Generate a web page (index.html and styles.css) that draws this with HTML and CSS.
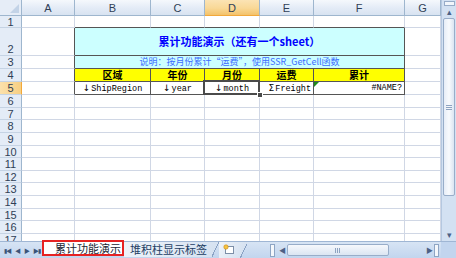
FILE: index.html
```html
<!DOCTYPE html>
<html lang="zh-CN">
<head>
    <meta charset="UTF-8">
    <title>累计功能演示</title>
    <link rel="stylesheet" href="styles.css">
</head>
<body>
    <div class="excel">
        <div class="main">
            <div class="sheet" id="sheet">
                <div class="corner"><span class="corner-tri"></span></div>
                <div class="ch">A</div>
                <div class="ch">B</div>
                <div class="ch">C</div>
                <div class="ch ch-sel">D</div>
                <div class="ch">E</div>
                <div class="ch">F</div>
                <div class="ch">G</div>

                <div class="rh">1</div>
                <div class="c"></div>
                <div class="c top-edge"></div>
                <div class="c top-edge"></div>
                <div class="c top-edge"></div>
                <div class="c top-edge"></div>
                <div class="c top-edge"></div>
                <div class="c"></div>

                <div class="rh rh-tall">2</div>
                <div class="c left-edge"></div>
                <div class="c title">累计功能演示（还有一个sheet）</div>
                <div class="c"></div>

                <div class="rh">3</div>
                <div class="c left-edge"></div>
                <div class="c note">说明：按月份累计“运费”，使用SSR_GetCell函数</div>
                <div class="c"></div>

                <div class="rh">4</div>
                <div class="c left-edge"></div>
                <div class="c head">区域</div>
                <div class="c head">年份</div>
                <div class="c head">月份</div>
                <div class="c head">运费</div>
                <div class="c head">累计</div>
                <div class="c"></div>

                <div class="rh rh-sel">5</div>
                <div class="c left-edge"></div>
                <div class="c field"><span class="arrow">↓</span>ShipRegion</div>
                <div class="c field"><span class="arrow">↓</span>year</div>
                <div class="c field selected"><span class="arrow">↓</span>month</div>
                <div class="c field right"><span class="arrow">Σ</span>Freight</div>
                <div class="c field right err">#NAME?</div>
                <div class="c"></div>
            </div>
            <div class="vscroll">
                <div class="vsplit"></div>
                <div class="vbtn">&#9652;</div>
                <div class="vthumb"><span class="grip-v"></span></div>
                <div class="vtrack"></div>
                <div class="vbtn">&#9662;</div>
            </div>
        </div>
        <div class="bottom">
            <div class="tabnav">
                <span class="nav">&#9646;&#9664;</span>
                <span class="nav">&#9664;</span>
                <span class="nav">&#9654;</span>
                <span class="nav">&#9654;&#9646;</span>
            </div>
            <div class="tabs">
                <div class="tab active">累计功能演示</div>
                <div class="tab">堆积柱显示标签</div>
                <div class="tab tab-new">
                    <svg width="12" height="10" viewBox="0 0 12 10">
                        <rect x="2.5" y="2.5" width="8" height="7" fill="#fff" stroke="#7d8fa8"/>
                        <circle cx="3" cy="3" r="2.2" fill="#f6c343" stroke="#c98a12" stroke-width="0.6"/>
                    </svg>
                </div>
            </div>
            <div class="hscroll">
                <span class="hsplit"></span>
                <span class="harrow">&#9664;</span>
                <span class="hthumb"><span class="grip-h"></span></span>
                <span class="htrack"></span>
                <span class="harrow">&#9654;</span>
                <span class="hend"></span>
            </div>
            <div class="box"></div>
        </div>
    </div>

    <script>
        const sheet = document.getElementById('sheet');
        for (let r = 6; r <= 17; r++) {
            const head = document.createElement('div');
            head.className = 'rh';
            head.textContent = r;
            sheet.appendChild(head);
            for (let c = 0; c < 7; c++) {
                const cell = document.createElement('div');
                cell.className = 'c';
                sheet.appendChild(cell);
            }
        }
    </script>
</body>
</html>
```

FILE: styles.css
```css
body {
    margin: 0;
    padding: 0;
    background: #fff;
}

.excel {
    width: 456px;
    height: 258px;
    display: flex;
    flex-direction: column;
    overflow: hidden;
    font-family: "Liberation Sans", "Noto Sans CJK SC", sans-serif;
}

.main {
    height: 241px;
    display: flex;
}

/* ---------- grid ---------- */

.sheet {
    width: 441px;
    height: 241px;
    overflow: hidden;
    display: grid;
    grid-template-columns: 22px 53px 76px 54px 55px 54px 91px 36px;
    grid-template-rows: 16px 12px 28px 13px 13px 13px repeat(12, 12.65px);
}

.sheet > div {
    box-sizing: border-box;
    border-right: 1px solid #d0d7e5;
    border-bottom: 1px solid #d0d7e5;
    min-width: 0;
    white-space: nowrap;
    overflow: hidden;
}

.corner {
    position: relative;
    background: #e6edf7;
    border-right-color: #9eb6ce !important;
    border-bottom-color: #9eb6ce !important;
}

.corner-tri {
    position: absolute;
    right: 2px;
    bottom: 2px;
    width: 0;
    height: 0;
    border-left: 9px solid transparent;
    border-bottom: 9px solid #c3d3e7;
}

.ch {
    background: linear-gradient(#f5f8fc, #e3ebf6 55%, #d8e3f1);
    border-right-color: #9eb6ce !important;
    border-bottom-color: #9eb6ce !important;
    color: #2f3f56;
    font-size: 11px;
    text-align: center;
    line-height: 16px;
}

.ch-sel {
    background: linear-gradient(#fbe3b4, #f9d896 55%, #f3c26a);
    border-bottom-color: #f2a83a !important;
}

.rh {
    background: #e4ecf7;
    border-right-color: #9eb6ce !important;
    border-bottom-color: #c5d3e4 !important;
    color: #2f3f56;
    font-size: 11px;
    text-align: center;
    line-height: 12px;
}

.rh-tall {
    display: flex;
    align-items: flex-end;
    justify-content: center;
}

.rh-sel {
    background: linear-gradient(90deg, #fbe1ac, #f7cf83);
    border-right-color: #f2a83a !important;
}

.c {
    background: #fff;
}

.top-edge {
    border-bottom-color: #555 !important;
}

.left-edge {
    border-right-color: #555 !important;
}

/* ---------- table ---------- */

.title {
    grid-column: span 5;
    background: #ccffff;
    border-right-color: #555 !important;
    border-bottom-color: #555 !important;
    color: #0000ff;
    font-weight: bold;
    font-size: 11px;
    font-family: "Noto Sans CJK SC", sans-serif;
    text-align: center;
    line-height: 27px;
}

.sheet > .note,
.sheet > .head {
    overflow: visible;
    display: flex;
    align-items: center;
    justify-content: center;
}

.note {
    grid-column: span 5;
    background: #ccffff;
    border-right-color: #555 !important;
    border-bottom-color: #555 !important;
    color: #3c6cff;
    font-size: 9px;
    font-family: "Noto Sans CJK SC", sans-serif;
    line-height: 10px;
}

.head {
    background: #ffff00;
    border-right-color: #555 !important;
    border-bottom-color: #555 !important;
    color: #000;
    font-weight: bold;
    font-size: 10px;
    font-family: "Noto Sans CJK SC", sans-serif;
    line-height: 10px;
}

.field {
    border-right-color: #555 !important;
    border-bottom-color: #555 !important;
    color: #000;
    font-size: 8.5px;
    font-family: "Liberation Mono", "DejaVu Sans Mono", monospace;
    text-align: center;
    line-height: 12px;
}

.arrow {
    font-family: "DejaVu Sans", sans-serif;
    font-size: 9px;
    margin-right: 1px;
}

.right {
    text-align: right;
    padding-right: 2px;
}

.sheet > .selected {
    position: relative;
    overflow: visible;
}

.selected::before {
    content: "";
    position: absolute;
    left: -2px;
    top: -2px;
    right: -1px;
    bottom: -1px;
    border: 2px solid #4a4a4a;
}

.selected::after {
    content: "";
    position: absolute;
    right: -4px;
    bottom: -4px;
    width: 4px;
    height: 4px;
    background: #4a4a4a;
    border: 1px solid #fff;
}

.sheet > .err {
    position: relative;
}

.err::before {
    content: "";
    position: absolute;
    left: 0;
    top: 0;
    border-top: 5px solid #1f8a1f;
    border-right: 5px solid transparent;
}

/* ---------- vertical scroll ---------- */

.vscroll {
    width: 15px;
    height: 241px;
    background: #d3e1f2;
    border-left: 1px solid #b5c8e0;
    box-sizing: border-box;
    display: flex;
    flex-direction: column;
    align-items: center;
}

.vsplit {
    width: 11px;
    height: 5px;
    margin-top: 1px;
    background: #f2f6fb;
    border: 1px solid #97acc8;
    box-sizing: border-box;
}

.vbtn {
    height: 12px;
    font-size: 9px;
    line-height: 12px;
    color: #4d6185;
}

.vthumb {
    width: 12px;
    height: 178px;
    background: linear-gradient(90deg, #e6edf7, #f8fafd 50%, #dbe5f2);
    border: 1px solid #98adc9;
    border-radius: 2px;
    box-sizing: border-box;
    display: flex;
    align-items: center;
    justify-content: center;
}

.grip-v {
    width: 6px;
    height: 5px;
    background: repeating-linear-gradient(#8da3c1 0 1px, transparent 1px 2px);
}

.vtrack {
    flex: 1;
}

/* ---------- bottom bar ---------- */

.bottom {
    height: 17px;
    display: flex;
    background: linear-gradient(#d7e4f4, #c2d5ee);
    border-top: 1px solid #9fb6d4;
    box-sizing: border-box;
}

.tabnav {
    width: 40px;
    display: flex;
    align-items: center;
    justify-content: space-around;
    padding-left: 2px;
}

.nav {
    font-size: 6px;
    color: #3c5478;
    letter-spacing: -1px;
}

.tabs {
    width: 228px;
    display: flex;
    align-items: flex-start;
}

.tab {
    height: 15px;
    padding: 0 12px 0 6px;
    font-size: 11px;
    line-height: 15px;
    white-space: nowrap;
    font-family: "Noto Sans CJK SC", sans-serif;
    color: #223d63;
    background: linear-gradient(115deg, #eef3f9 0, #d6e2f1 calc(100% - 7px), #8aa2c4 calc(100% - 7px), #8aa2c4 calc(100% - 6px), transparent calc(100% - 6px));
}

.tab.active {
    color: #1b2533;
    background: #fff;
    margin-top: -2px;
    height: 16px;
    line-height: 13px;
    padding: 0 0 0 11px;
    width: 82px;
    box-sizing: border-box;
    border: 2px solid #e62222;
    overflow: visible;
}

.tab-new {
    padding: 2px 12px 0 4px;
    line-height: 0;
}

.hscroll {
    flex: 1;
    display: flex;
    align-items: center;
}

.hsplit {
    width: 3px;
    height: 11px;
    background: #f4f7fb;
    border: 1px solid #8ea5c4;
    margin-right: 4px;
}

.harrow {
    font-size: 7px;
    color: #4d6185;
    width: 8px;
}

.hthumb {
    width: 102px;
    height: 12px;
    background: linear-gradient(#f6f8fc, #dbe5f2);
    border: 1px solid #98adc9;
    border-radius: 2px;
    box-sizing: border-box;
    display: flex;
    align-items: center;
    justify-content: center;
}

.grip-h {
    width: 6px;
    height: 5px;
    background: repeating-linear-gradient(90deg, #8da3c1 0 1px, transparent 1px 2px);
}

.htrack {
    flex: 1;
}

.hend {
    width: 3px;
    height: 11px;
    background: #f4f7fb;
    border: 1px solid #8ea5c4;
    margin-right: 2px;
}

.box {
    width: 15px;
    background: #c2d5ee;
}
```
